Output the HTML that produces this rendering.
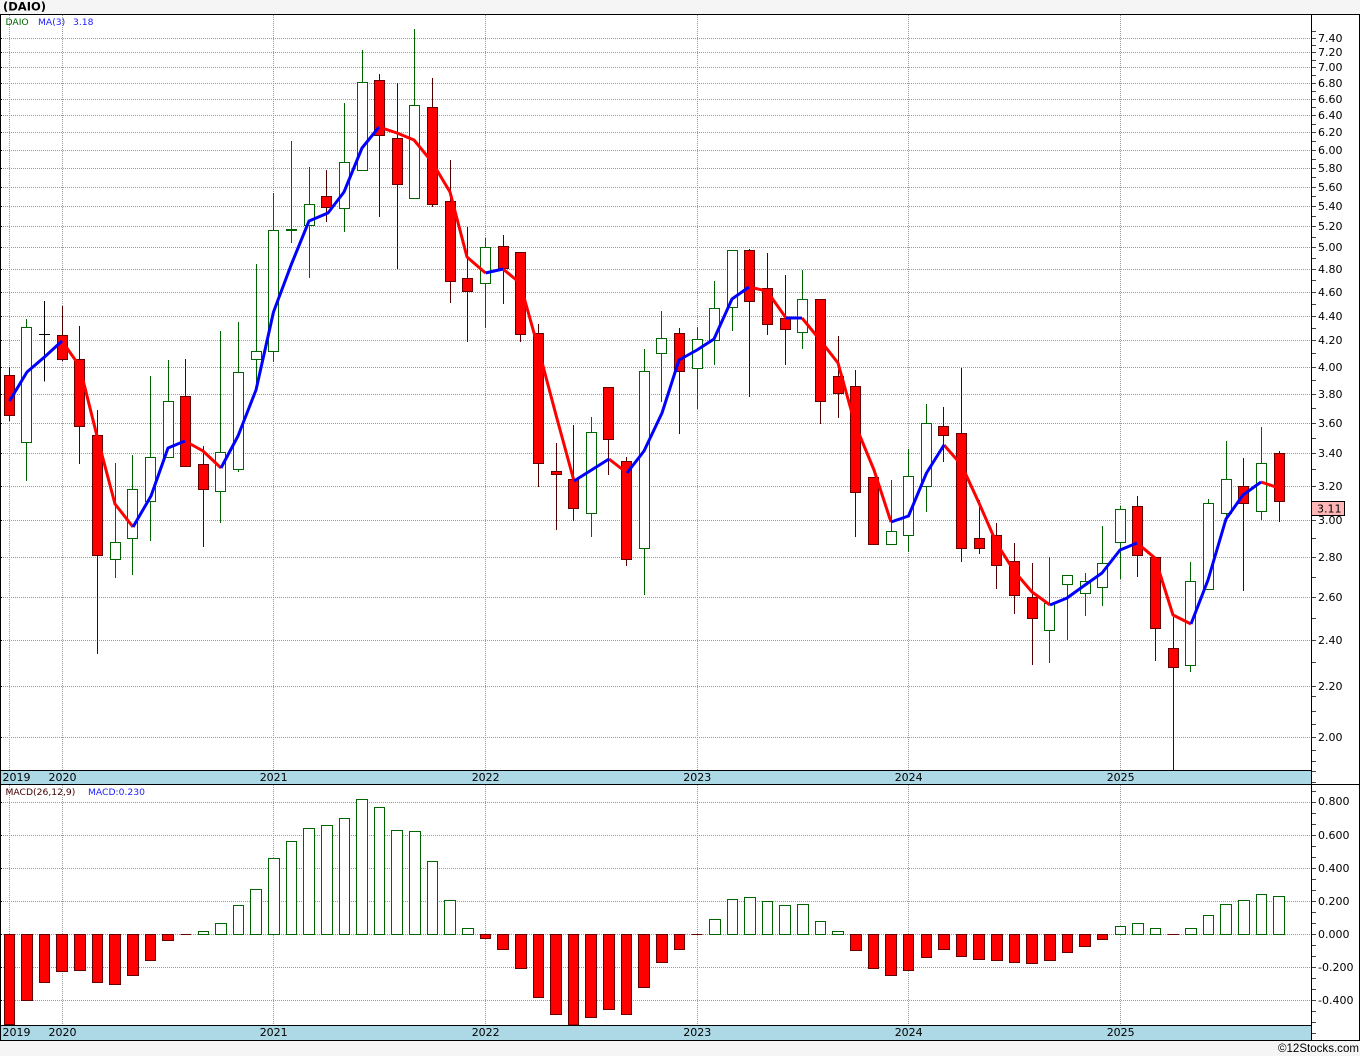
<!DOCTYPE html>
<html><head><meta charset="utf-8"><title>(DAIO)</title>
<style>
html,body{margin:0;padding:0;width:1360px;height:1056px;background:#f5f5f5;overflow:hidden}
svg{display:block}
text{font-family:"DejaVu Sans","Liberation Sans",sans-serif;font-size:11px;fill:#000}
.s{font-size:9.2px}
</style></head><body>
<svg width="1360" height="1056" viewBox="0 0 1360 1056" xmlns="http://www.w3.org/2000/svg">
<rect x="0" y="0" width="1360" height="1056" fill="#f5f5f5"/>
<rect x="0" y="14" width="1360" height="1027" fill="#fff"/>
<text x="3" y="10.5" style="font-weight:bold;font-size:11.5px;fill:#000">(DAIO)</text>

<g shape-rendering="crispEdges">
<!-- grid -->
<path fill="none" stroke="#999" stroke-dasharray="1 1" d="M1 38.5H1311M1 52.5H1311M1 67.5H1311M1 83.5H1311M1 99.5H1311M1 115.5H1311M1 132.5H1311M1 150.5H1311M1 168.5H1311M1 187.5H1311M1 206.5H1311M1 226.5H1311M1 247.5H1311M1 269.5H1311M1 292.5H1311M1 316.5H1311M1 340.5H1311M1 367.5H1311M1 394.5H1311M1 423.5H1311M1 453.5H1311M1 486.5H1311M1 520.5H1311M1 557.5H1311M1 597.5H1311M1 640.5H1311M1 686.5H1311M1 737.5H1311M1 802.5H1311M1 835.5H1311M1 868.5H1311M1 901.5H1311M1 934.5H1311M1 967.5H1311M1 1000.5H1311M9.5 15V770M62.5 15V770M273.5 15V770M485.5 15V770M697.5 15V770M908.5 15V770M1120.5 15V770M9.5 785V1025M62.5 785V1025M273.5 785V1025M485.5 785V1025M697.5 785V1025M908.5 785V1025M1120.5 785V1025"/>
<!-- wicks green -->
<path fill="none" stroke="#006400" d="M26.5 319V481M115.5 463V578M132.5 455V575M150.5 376V541M168.5 360V457M220.5 331V523M238.5 322V472M256.5 264V387M273.5 193V362M291.5 141V243M309.5 167V278M344.5 103V232M362.5 50V170M414.5 29V198M485.5 238V328M591.5 417V537M644.5 349V595M661.5 311V402M697.5 327V409M714.5 281V365M732.5 250V331M802.5 270V349M891.5 480V531M908.5 449V552M926.5 404V512M1049.5 557V663M1067.5 584V640M1085.5 573V616M1102.5 526V606M1120.5 506V579M1190.5 562V672M1208.5 499V589M1226.5 441V518M1261.5 427V520"/>
<!-- wicks red -->
<path fill="none" stroke="#550000" d="M9.5 367V421M62.5 306V361M79.5 326V464M97.5 410V654M185.5 359V466M203.5 446V547M326.5 170V222M379.5 74V217M397.5 83V269M432.5 78V207M450.5 160V303M467.5 227V342M503.5 235V304M520.5 252V342M538.5 324V487M556.5 443V530M573.5 425V521M608.5 387V475M626.5 457V566M679.5 328V434M749.5 249V397M767.5 253V335M785.5 275V365M820.5 299V424M838.5 336V418M855.5 370V537M873.5 477V544M943.5 407V462M961.5 368V562M979.5 500V554M996.5 523V589M1014.5 543V614M1032.5 563V665M1137.5 496V577M1155.5 557V661M1173.5 617V770M1243.5 458V591M1279.5 451V522"/>
<!-- crosses -->
<path fill="none" stroke="#000" d="M44.5 301V381.5M39 334.5H50"/>
<rect x="286" y="229" width="11" height="2" fill="#006400"/>
<!-- bodies green -->
<path fill="#fff" stroke="#006400" d="M21.5 327.5h10v115h-10zM110.5 542.5h10v17h-10zM127.5 489.5h10v49h-10zM145.5 457.5h10v44h-10zM163.5 401.5h10v56h-10zM215.5 452.5h10v39h-10zM233.5 372.5h10v97h-10zM251.5 351.5h10v8h-10zM268.5 230.5h10v121h-10zM304.5 204.5h10v21h-10zM339.5 162.5h10v46h-10zM357.5 82.5h10v88h-10zM409.5 105.5h10v93h-10zM480.5 247.5h10v36h-10zM586.5 432.5h10v81h-10zM639.5 371.5h10v177h-10zM656.5 338.5h10v15h-10zM692.5 339.5h10v29h-10zM709.5 308.5h10v32h-10zM727.5 250.5h10v57h-10zM797.5 299.5h10v33h-10zM886.5 531.5h10v13h-10zM903.5 476.5h10v59h-10zM921.5 423.5h10v63h-10zM1044.5 603.5h10v27h-10zM1062.5 575.5h10v9h-10zM1080.5 581.5h10v12h-10zM1097.5 563.5h10v24h-10zM1115.5 509.5h10v33h-10zM1185.5 581.5h10v84h-10zM1203.5 503.5h10v86h-10zM1221.5 479.5h10v34h-10zM1256.5 463.5h10v48h-10z"/>
<!-- bodies red -->
<path fill="#f00" stroke="#660000" d="M4.5 375.5h10v40h-10zM57.5 335.5h10v24h-10zM74.5 359.5h10v67h-10zM92.5 435.5h10v120h-10zM180.5 396.5h10v70h-10zM198.5 464.5h10v25h-10zM321.5 196.5h10v11h-10zM374.5 80.5h10v55h-10zM392.5 138.5h10v46h-10zM427.5 107.5h10v97h-10zM445.5 201.5h10v80h-10zM462.5 278.5h10v13h-10zM498.5 246.5h10v22h-10zM515.5 252.5h10v82h-10zM533.5 333.5h10v130h-10zM551.5 471.5h10v3h-10zM568.5 479.5h10v29h-10zM603.5 387.5h10v52h-10zM621.5 461.5h10v98h-10zM674.5 333.5h10v38h-10zM744.5 250.5h10v51h-10zM762.5 288.5h10v36h-10zM780.5 318.5h10v11h-10zM815.5 299.5h10v102h-10zM833.5 376.5h10v17h-10zM850.5 386.5h10v106h-10zM868.5 477.5h10v67h-10zM938.5 426.5h10v9h-10zM956.5 433.5h10v115h-10zM974.5 538.5h10v10h-10zM991.5 535.5h10v30h-10zM1009.5 561.5h10v34h-10zM1027.5 597.5h10v21h-10zM1132.5 506.5h10v49h-10zM1150.5 557.5h10v71h-10zM1168.5 648.5h10v19h-10zM1238.5 486.5h10v17h-10zM1274.5 453.5h10v48h-10z"/>
<!-- macd green -->
<path fill="#fff" stroke="#006400" d="M198.5 931.5h10V934.5h-10zM215.5 923.5h11V934.5h-11zM233.5 905.5h10V934.5h-10zM250.5 889.5h11V934.5h-11zM268.5 858.5h11V934.5h-11zM286.5 841.5h10V934.5h-10zM303.5 828.5h11V934.5h-11zM321.5 825.5h11V934.5h-11zM339.5 818.5h10V934.5h-10zM356.5 799.5h11V934.5h-11zM374.5 807.5h10V934.5h-10zM391.5 830.5h11V934.5h-11zM409.5 831.5h11V934.5h-11zM427.5 861.5h10V934.5h-10zM444.5 900.5h11V934.5h-11zM462.5 928.5h11V934.5h-11zM709.5 919.5h11V934.5h-11zM727.5 899.5h10V934.5h-10zM744.5 897.5h11V934.5h-11zM762.5 901.5h10V934.5h-10zM779.5 905.5h11V934.5h-11zM797.5 904.5h11V934.5h-11zM815.5 921.5h10V934.5h-10zM832.5 931.5h11V934.5h-11zM1115.5 926.5h10V934.5h-10zM1132.5 923.5h11V934.5h-11zM1150.5 928.5h10V934.5h-10zM1185.5 928.5h11V934.5h-11zM1203.5 915.5h10V934.5h-10zM1220.5 904.5h11V934.5h-11zM1238.5 900.5h11V934.5h-11zM1256.5 894.5h10V934.5h-10zM1273.5 896.5h11V934.5h-11z"/>
<!-- macd red -->
<path fill="#f00" stroke="#660000" d="M4.5 934.5h10V1024.5h-10zM21.5 934.5h11V1000.5h-11zM39.5 934.5h10V982.5h-10zM56.5 934.5h11V971.5h-11zM74.5 934.5h11V970.5h-11zM92.5 934.5h10V982.5h-10zM109.5 934.5h11V984.5h-11zM127.5 934.5h11V975.5h-11zM145.5 934.5h10V960.5h-10zM162.5 934.5h11V940.5h-11zM480.5 934.5h10V938.5h-10zM497.5 934.5h11V949.5h-11zM515.5 934.5h11V968.5h-11zM533.5 934.5h10V997.5h-10zM550.5 934.5h11V1014.5h-11zM568.5 934.5h10V1025h-10zM585.5 934.5h11V1017.5h-11zM603.5 934.5h11V1009.5h-11zM621.5 934.5h10V1014.5h-10zM638.5 934.5h11V987.5h-11zM656.5 934.5h11V962.5h-11zM674.5 934.5h10V949.5h-10zM850.5 934.5h11V950.5h-11zM868.5 934.5h10V968.5h-10zM885.5 934.5h11V975.5h-11zM903.5 934.5h10V970.5h-10zM921.5 934.5h10V957.5h-10zM938.5 934.5h11V949.5h-11zM956.5 934.5h10V956.5h-10zM973.5 934.5h11V959.5h-11zM991.5 934.5h11V960.5h-11zM1009.5 934.5h10V962.5h-10zM1026.5 934.5h11V963.5h-11zM1044.5 934.5h11V960.5h-11zM1062.5 934.5h10V952.5h-10zM1079.5 934.5h11V946.5h-11zM1097.5 934.5h10V939.5h-10z"/>
<path fill="none" stroke="#660000" d="M180.5 934.5H191M691.5 934.5H702.5M1167.5 934.5H1179"/>
</g>

<!-- MA line -->
<g fill="none" stroke-width="3" stroke-linejoin="round" stroke-linecap="butt">
<path stroke="#f00" d="M62 341L79.5 366L97 436L115 504L133 527"/>
<path stroke="#f00" d="M185 441L203 451L221 468"/>
<path stroke="#f00" d="M379 127L397 133L414 140L432 162L450 192L467 257L485.5 273"/>
<path stroke="#f00" d="M503 269L520 283L538.5 349L556 415L574 481"/>
<path stroke="#f00" d="M609 459L627 473"/>
<path stroke="#f00" d="M749 287L767 291L786 318"/>
<path stroke="#f00" d="M802 318L820 340L838 363L855 424L874 470L891 522"/>
<path stroke="#f00" d="M944 445L961.5 465L979 503L996.5 543L1014 571L1032 592L1050 605"/>
<path stroke="#f00" d="M1137 543L1155 558L1173 615L1191 624"/>
<path stroke="#f00" d="M1261 482L1279 488"/>
<path stroke="#00f" d="M9.5 401L27 372L44.5 357L62 341"/>
<path stroke="#00f" d="M133 527L151 496L168 448L185 441"/>
<path stroke="#00f" d="M221 468L238 436L256 390L273.5 312L291.5 264L309 221L328 213L344 192L362 148L379 127"/>
<path stroke="#00f" d="M485.5 273L503 269"/>
<path stroke="#00f" d="M574 481L591.5 470L609 459"/>
<path stroke="#00f" d="M627 473L644 451L662 413L679 360L697 350L714 339L732 299L749 287"/>
<path stroke="#00f" d="M786 318L802 318"/>
<path stroke="#00f" d="M891 522L908.5 516L926.5 473L944 445"/>
<path stroke="#00f" d="M1050 605L1067 598L1085 585L1102 573L1120 550L1137 543"/>
<path stroke="#00f" d="M1191 624L1208 580L1226 519L1243 495L1261 482"/>
</g>

<g shape-rendering="crispEdges">
<!-- bands -->
<rect x="0" y="770" width="1311" height="14" fill="#add8e6"/>
<rect x="0" y="1025" width="1311" height="15" fill="#add8e6"/>
<path fill="none" stroke="#000" d="M0 14.5H1360M0 770.5H1311M0 784.5H1360M0 1025.5H1311M0 1040.5H1360M0.5 14V1041M1311.5 14V1041M1359.5 14V1041"/>
<!-- left ticks -->
<path fill="none" stroke="#000" d="M0 38.5h2M0 52.5h2M0 67.5h2M0 83.5h2M0 99.5h2M0 115.5h2M0 132.5h2M0 150.5h2M0 168.5h2M0 187.5h2M0 206.5h2M0 226.5h2M0 247.5h2M0 269.5h2M0 292.5h2M0 316.5h2M0 340.5h2M0 367.5h2M0 394.5h2M0 423.5h2M0 453.5h2M0 486.5h2M0 520.5h2M0 557.5h2M0 597.5h2M0 640.5h2M0 686.5h2M0 737.5h2M0 802.5h2M0 835.5h2M0 868.5h2M0 901.5h2M0 934.5h2M0 967.5h2M0 1000.5h2"/>
<!-- right ticks -->
<path fill="none" stroke="#444" d="M1312 31.5h4M1312 38.5h4M1312 45.5h4M1312 52.5h4M1312 60.5h4M1312 67.5h4M1312 75.5h4M1312 83.5h4M1312 91.5h4M1312 99.5h4M1312 107.5h4M1312 115.5h4M1312 124.5h4M1312 132.5h4M1312 141.5h4M1312 150.5h4M1312 159.5h4M1312 168.5h4M1312 177.5h4M1312 187.5h4M1312 196.5h4M1312 206.5h4M1312 216.5h4M1312 226.5h4M1312 237.5h4M1312 247.5h4M1312 258.5h4M1312 269.5h4M1312 280.5h4M1312 292.5h4M1312 304.5h4M1312 316.5h4M1312 328.5h4M1312 340.5h4M1312 353.5h4M1312 367.5h4M1312 380.5h4M1312 394.5h4M1312 408.5h4M1312 423.5h4M1312 438.5h4M1312 453.5h4M1312 469.5h4M1312 486.5h4M1312 503.5h4M1312 520.5h4M1312 538.5h4M1312 557.5h4M1312 577.5h4M1312 597.5h4M1312 618.5h4M1312 640.5h4M1312 662.5h4M1312 686.5h4M1312 696.5h4M1312 711.5h4M1312 724.5h4M1312 737.5h4M1312 750.5h4M1312 761.5h4M1312 771.5h4M1312 782.5h4M1312 791.5h4M1312 802.5h4M1312 813.5h4M1312 824.5h4M1312 835.5h4M1312 846.5h4M1312 857.5h4M1312 868.5h4M1312 879.5h4M1312 890.5h4M1312 901.5h4M1312 912.5h4M1312 923.5h4M1312 934.5h4M1312 945.5h4M1312 956.5h4M1312 967.5h4M1312 978.5h4M1312 989.5h4M1312 1000.5h4M1312 1011.5h4M1312 1022.5h4M1312 1033.5h4"/>
</g>

<!-- legend -->
<text class="s" x="5.5" y="25" style="fill:#006400">DAIO</text>
<text class="s" x="38" y="25" style="fill:#2020ff">MA(3)</text>
<text class="s" x="73" y="25" style="fill:#2020ff">3.18</text>
<text class="s" x="5.5" y="795" style="fill:#400000">MACD(26,12,9)</text>
<text class="s" x="88" y="795" style="fill:#2020ff">MACD:0.230</text>

<!-- years -->
<text x="2.5" y="781">2019</text><text x="48.5" y="781">2020</text><text x="259.7" y="781">2021</text><text x="471.7" y="781">2022</text><text x="683.3" y="781">2023</text><text x="894.7" y="781">2024</text><text x="1106.7" y="781">2025</text>
<text x="2.5" y="1036">2019</text><text x="48.5" y="1036">2020</text><text x="259.7" y="1036">2021</text><text x="471.7" y="1036">2022</text><text x="683.3" y="1036">2023</text><text x="894.7" y="1036">2024</text><text x="1106.7" y="1036">2025</text>

<!-- price labels -->
<text x="1318" y="42">7.40</text><text x="1318" y="56">7.20</text><text x="1318" y="71">7.00</text><text x="1318" y="87">6.80</text><text x="1318" y="103">6.60</text><text x="1318" y="119">6.40</text><text x="1318" y="136">6.20</text><text x="1318" y="154">6.00</text><text x="1318" y="172">5.80</text><text x="1318" y="191">5.60</text><text x="1318" y="210">5.40</text><text x="1318" y="230">5.20</text><text x="1318" y="251">5.00</text><text x="1318" y="273">4.80</text><text x="1318" y="296">4.60</text><text x="1318" y="320">4.40</text><text x="1318" y="344">4.20</text><text x="1318" y="371">4.00</text><text x="1318" y="398">3.80</text><text x="1318" y="427">3.60</text><text x="1318" y="457">3.40</text><text x="1318" y="490">3.20</text><text x="1318" y="524">3.00</text><text x="1318" y="561">2.80</text><text x="1318" y="601">2.60</text><text x="1318" y="644">2.40</text><text x="1318" y="690">2.20</text><text x="1318" y="741">2.00</text>
<!-- macd labels -->
<text x="1318" y="805">0.800</text><text x="1318" y="839">0.600</text><text x="1318" y="872">0.400</text><text x="1318" y="905">0.200</text><text x="1318" y="938">0.000</text><text x="1318" y="971">-0.200</text><text x="1318" y="1004">-0.400</text>

<!-- current price -->
<rect x="1311.5" y="501.5" width="33" height="14" fill="#ffb6b6" stroke="#000" shape-rendering="crispEdges"/>
<text x="1317" y="512.5">3.11</text>

<text x="1359" y="1052" text-anchor="end" textLength="81" lengthAdjust="spacingAndGlyphs" style="font-family:'Liberation Sans',sans-serif;font-size:12px">©12Stocks.com</text>
</svg>
</body></html>
